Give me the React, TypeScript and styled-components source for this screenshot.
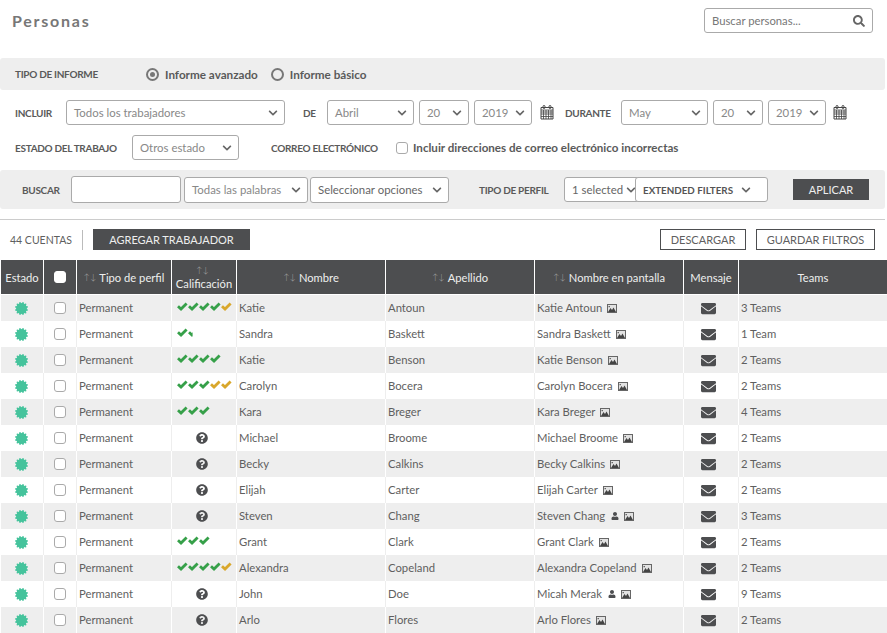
import React from 'react';
import styled, { createGlobalStyle } from 'styled-components';
import { FaCertificate, FaChevronDown, FaEnvelope, FaQuestionCircle, FaSearch, FaUser } from 'react-icons/fa';

const GlobalStyle = createGlobalStyle`
  html, body {
    margin: 0;
    padding: 0;
    background: #fff;
    overflow: hidden;
  }
  body {
    font-family: "Lato", "Liberation Sans", sans-serif;
    font-size: 12px;
    color: #5f5f5f;
  }
  * { box-sizing: border-box; }
`;

const Page = styled.div`
  width: 887px;
  height: 633px;
  overflow: hidden;
`;

const TopBar = styled.div`
  height: 58px;
  display: flex;
  justify-content: space-between;
  padding: 8px 14px 0 12px;
`;

const Title = styled.h1`
  margin: 3px 0 0;
  font-size: 16px;
  font-weight: 700;
  letter-spacing: 1.75px;
  color: #777;
`;

const SearchBox = styled.div`
  width: 169px;
  height: 25px;
  border: 1px solid #aaa;
  border-radius: 3px;
  display: flex;
  align-items: center;
  justify-content: space-between;
  padding: 0 7px;
  font-size: 11.3px;
  color: #777;
  svg { color: #666; font-size: 12px; }
`;

const Band = styled.div<{ $h: number; $pad: number; $top?: number }>`
  width: 885px;
  height: ${(p) => p.$h}px;
  margin-top: ${(p) => p.$top ?? 0}px;
  padding-left: ${(p) => p.$pad}px;
  background: #eee;
  border-radius: 3px;
  display: flex;
  align-items: center;
`;

const Label = styled.span<{ $w?: number; $left?: number }>`
  font-size: 10px;
  font-weight: 700;
  letter-spacing: -0.3px;
  color: #5a5a5a;
  white-space: nowrap;
  ${(p) => (p.$w ? `width: ${p.$w}px; flex: none;` : '')}
  ${(p) => (p.$left ? `padding-left: ${p.$left}px;` : '')}
`;

const Radio = styled.span<{ $on?: boolean }>`
  width: 13px;
  height: 13px;
  border-radius: 50%;
  border: 2px solid #777;
  display: inline-flex;
  align-items: center;
  justify-content: center;
  margin-right: 6px;
  flex: none;
  &::after {
    content: '';
    width: 5px;
    height: 5px;
    border-radius: 50%;
    background: ${(p) => (p.$on ? '#777' : 'transparent')};
  }
`;

const OptionText = styled.span`
  font-size: 11.7px;
  font-weight: 700;
  color: #5a5a5a;
  margin-right: 13px;
  white-space: nowrap;
`;

const FilterRow = styled.div<{ $top: number }>`
  display: flex;
  align-items: center;
  height: 25px;
  margin-top: ${(p) => p.$top}px;
  padding-left: 15px;
`;

const Gap = styled.span<{ $w: number }>`
  width: ${(p) => p.$w}px;
  flex: none;
`;

const SelectBox = styled.div<{ $w: number; $h?: number; $left?: number; $dark?: boolean }>`
  width: ${(p) => p.$w}px;
  height: ${(p) => p.$h ?? 25}px;
  margin-left: ${(p) => p.$left ?? 0}px;
  flex: none;
  background: #fff;
  border: 1px solid #aaa;
  border-radius: 3px;
  display: flex;
  align-items: center;
  justify-content: space-between;
  padding: 0 6px 0 7px;
  font-size: 11.4px;
  color: ${(p) => (p.$dark ? '#666' : '#888')};
  white-space: nowrap;
  svg { color: #666; font-size: 10px; flex: none; }
`;

const ExtendedBox = styled(SelectBox)`
  position: relative;
  margin-left: -8px;
  justify-content: flex-start;
  gap: 8px;
  font-size: 9.8px;
  font-weight: 700;
  color: #555;
`;

const CalendarIcon = styled.svg`
  width: 14px;
  height: 15px;
  flex: none;
`;

const CheckBox = styled.span<{ $white?: boolean }>`
  display: block;
  width: 12px;
  height: 12px;
  border: 1px solid ${(p) => (p.$white ? '#fff' : '#aaa')};
  border-radius: 3px;
  background: #fff;
  flex: none;
`;

const CheckLabel = styled.span`
  margin-left: 5px;
  font-size: 11.6px;
  font-weight: 700;
  color: #5a5a5a;
  white-space: nowrap;
`;

const SearchInput = styled.div`
  width: 110px;
  height: 27px;
  margin-left: 10px;
  flex: none;
  background: #fff;
  border: 1px solid #aaa;
  border-radius: 3px;
`;

const DarkButton = styled.button<{ $w: number; $left: number }>`
  width: ${(p) => p.$w}px;
  height: 21px;
  margin-left: ${(p) => p.$left}px;
  flex: none;
  border: 0;
  background: #4d4e50;
  color: #eee;
  font-family: inherit;
  font-size: 11px;
  padding: 0;
`;

const OutlineButton = styled.button<{ $w: number; $left: number }>`
  width: ${(p) => p.$w}px;
  height: 21px;
  margin-left: ${(p) => p.$left}px;
  border: 1px solid #4d4e50;
  background: #fff;
  color: #5f5f5f;
  font-family: inherit;
  font-size: 11px;
  padding: 0;
`;

const Divider = styled.hr`
  width: 885px;
  height: 1px;
  margin: 10px 0 0;
  border: 0;
  background: #ccc;
`;

const Toolbar = styled.div`
  height: 21px;
  margin-top: 9px;
  padding: 0 12px 0 10px;
  display: flex;
  align-items: center;
`;

const Count = styled.span`
  font-size: 10.5px;
  color: #5f5f5f;
  padding-right: 10px;
  margin-right: 10px;
  line-height: 20px;
  border-right: 1px solid #bbb;
`;

const Spacer = styled.div`
  flex: 1;
`;

const columns = '42px 32px 94px 64px 148px 148px 148px 54px 148px';

const HeaderRow = styled.div`
  display: grid;
  grid-template-columns: ${columns};
  column-gap: 1px;
  height: 34px;
  margin: 10px 0 1px 1px;
  background: #fff;
`;

const HeaderCell = styled.div`
  background: #4d4e50;
  color: #eee;
  font-size: 11.2px;
  display: flex;
  align-items: center;
  justify-content: center;
  white-space: nowrap;
`;

const StackCell = styled(HeaderCell)`
  flex-direction: column;
  line-height: 14px;
`;

const SortArrows = styled.span`
  color: #aaa;
  font-size: 8.5px;
  font-weight: 300;
  margin-right: 3px;
`;

const Row = styled.div<{ $odd: boolean }>`
  display: grid;
  grid-template-columns: ${columns};
  column-gap: 1px;
  height: 26px;
  margin-left: 1px;
  background: ${(p) => (p.$odd ? '#fff' : '#eee')};
  > div + div { box-shadow: -1px 0 0 ${(p) => (p.$odd ? '#eee' : '#fff')}; }
`;

const Cell = styled.div`
  display: flex;
  align-items: center;
  padding: 0 0 2px 2px;
  font-size: 11.3px;
  color: #5f5f5f;
  white-space: nowrap;
  min-width: 0;
`;

// centred icon cell, $shift moves the icon left of the middle
const IconCell = styled.div<{ $shift?: number }>`
  display: flex;
  align-items: center;
  justify-content: center;
  padding-right: ${(p) => p.$shift ?? 0}px;
`;

const CheckCell = styled(IconCell)`
  padding-bottom: 1px;
`;

const Status = styled(FaCertificate)`
  color: #45c39c;
  font-size: 13px;
`;

const Stars = styled.span`
  display: flex;
  margin: -1px 0 0 3px;
`;

const TickIcon = styled.svg<{ $half?: boolean }>`
  width: 11px;
  height: 9px;
  flex: none;
  ${(p) => (p.$half ? 'clip-path: inset(0 58% 0 0);' : '')}
`;

const Tick: React.FC<{ color: string; half?: boolean }> = ({ color, half }) => (
  <TickIcon viewBox="0 0 11 9" $half={half}>
    <path d="M1 4.2 L4 7 L9.6 1.4" fill="none" stroke={color} strokeWidth="2.8" />
  </TickIcon>
);

const Question = styled(FaQuestionCircle)`
  color: #4d4e50;
  font-size: 12px;
`;

const Mail = styled(FaEnvelope)`
  color: #4d4e50;
  font-size: 15px;
`;

const UserIcon = styled(FaUser)`
  color: #4d4e50;
  font-size: 8px;
  margin: 2px 0 0 6px;
  flex: none;
`;

const PhotoIcon = styled.svg`
  width: 10px;
  height: 9px;
  margin: 2px 0 0 5px;
  flex: none;
`;

const Photo = () => (
  <PhotoIcon viewBox="0 0 10 9">
    <rect x="0.5" y="0.5" width="9" height="8" fill="#e2e2e2" stroke="#666" />
    <path d="M1 8 L3.5 4 L5 6 L6.5 3.5 L9 8 Z" fill="#444" />
    <rect x="1.5" y="2" width="1.5" height="1.2" fill="#666" />
  </PhotoIcon>
);

const Calendar = () => (
  <CalendarIcon viewBox="0 0 14 15">
    <rect x="3" y="0.5" width="2" height="3" rx="1" fill="none" stroke="#444" />
    <rect x="9" y="0.5" width="2" height="3" rx="1" fill="none" stroke="#444" />
    <path d="M1 2.5H3M5 2.5H9M11 2.5H13V14H1V2.5Z" fill="none" stroke="#444" />
    <path d="M1 5H13M1 7H13M1 9H13M1 11.5H13M3.5 5V14M6 5V14M8.5 5V14M11 5V14" stroke="#444" strokeWidth="0.8" />
  </CalendarIcon>
);

type Person = {
  rating: string;
  first: string;
  last: string;
  screen: string;
  user?: boolean;
  teams: string;
};

// g = green tick, y = gold tick, h = half tick, ? = not rated
const people: Person[] = [
  { rating: 'ggggy', first: 'Katie', last: 'Antoun', screen: 'Katie Antoun', teams: '3 Teams' },
  { rating: 'gh', first: 'Sandra', last: 'Baskett', screen: 'Sandra Baskett', teams: '1 Team' },
  { rating: 'gggg', first: 'Katie', last: 'Benson', screen: 'Katie Benson', teams: '2 Teams' },
  { rating: 'gggyy', first: 'Carolyn', last: 'Bocera', screen: 'Carolyn Bocera', teams: '2 Teams' },
  { rating: 'ggg', first: 'Kara', last: 'Breger', screen: 'Kara Breger', teams: '4 Teams' },
  { rating: '?', first: 'Michael', last: 'Broome', screen: 'Michael Broome', teams: '2 Teams' },
  { rating: '?', first: 'Becky', last: 'Calkins', screen: 'Becky Calkins', teams: '2 Teams' },
  { rating: '?', first: 'Elijah', last: 'Carter', screen: 'Elijah Carter', teams: '2 Teams' },
  { rating: '?', first: 'Steven', last: 'Chang', screen: 'Steven Chang', user: true, teams: '3 Teams' },
  { rating: 'ggg', first: 'Grant', last: 'Clark', screen: 'Grant Clark', teams: '2 Teams' },
  { rating: 'ggggy', first: 'Alexandra', last: 'Copeland', screen: 'Alexandra Copeland', teams: '2 Teams' },
  { rating: '?', first: 'John', last: 'Doe', screen: 'Micah Merak', user: true, teams: '9 Teams' },
  { rating: '?', first: 'Arlo', last: 'Flores', screen: 'Arlo Flores', teams: '2 Teams' },
];

const Rating: React.FC<{ value: string }> = ({ value }) => {
  if (value === '?') {
    return (
      <IconCell $shift={5}>
        <Question />
      </IconCell>
    );
  }
  return (
    <Cell>
      <Stars>
        {value.split('').map((c, i) => (
          <Tick key={i} color={c === 'y' ? '#d9a72b' : '#36a049'} half={c === 'h'} />
        ))}
      </Stars>
    </Cell>
  );
};

const Select: React.FC<{ w: number; h?: number; left?: number; dark?: boolean; text: string }> = ({ w, h, left, dark, text }) => (
  <SelectBox $w={w} $h={h} $left={left} $dark={dark}>
    {text}
    <FaChevronDown />
  </SelectBox>
);

const Sort = () => <SortArrows>↑↓</SortArrows>;

const App: React.FC = () => (
  <Page>
    <GlobalStyle />
    <TopBar>
      <Title>Personas</Title>
      <SearchBox>
        Buscar personas...
        <FaSearch />
      </SearchBox>
    </TopBar>

    <Band $h={32} $pad={15}>
      <Label $w={131}>TIPO DE INFORME</Label>
      <Radio $on />
      <OptionText>Informe avanzado</OptionText>
      <Radio />
      <OptionText>Informe básico</OptionText>
    </Band>

    <FilterRow $top={10}>
      <Label $w={51}>INCLUIR</Label>
      <Select w={219} text="Todos los trabajadores" />
      <Label $w={42} $left={18}>DE</Label>
      <Select w={87} text="Abril" />
      <Select w={50} text="20" left={5} />
      <Select w={58} text="2019" left={5} />
      <Gap $w={8} />
      <Calendar />
      <Gap $w={11} />
      <Label $w={56}>DURANTE</Label>
      <Select w={87} text="May" />
      <Select w={50} text="20" left={5} />
      <Select w={58} text="2019" left={5} />
      <Gap $w={7} />
      <Calendar />
    </FilterRow>

    <FilterRow $top={10}>
      <Label $w={117}>ESTADO DEL TRABAJO</Label>
      <Select w={107} text="Otros estado" />
      <Label $w={157} $left={32}>CORREO ELECTRÓNICO</Label>
      <CheckBox />
      <CheckLabel>Incluir direcciones de correo electrónico incorrectas</CheckLabel>
    </FilterRow>

    <Band $h={39} $pad={22} $top={10}>
      <Label $w={39}>BUSCAR</Label>
      <SearchInput />
      <Select w={124} h={26} left={3} text="Todas las palabras" />
      <Select w={139} h={26} left={2} dark text="Seleccionar opciones" />
      <Label $w={114} $left={30}>TIPO DE PERFIL</Label>
      <Select w={79} left={1} dark text="1 selected" />
      <ExtendedBox $w={133}>
        EXTENDED FILTERS
        <FaChevronDown />
      </ExtendedBox>
      <DarkButton $w={76} $left={25}>APLICAR</DarkButton>
    </Band>

    <Divider />

    <Toolbar>
      <Count>44 CUENTAS</Count>
      <DarkButton $w={157} $left={0}>AGREGAR TRABAJADOR</DarkButton>
      <Spacer />
      <OutlineButton $w={86} $left={0}>DESCARGAR</OutlineButton>
      <OutlineButton $w={119} $left={10}>GUARDAR FILTROS</OutlineButton>
    </Toolbar>

    <HeaderRow>
      <HeaderCell>Estado</HeaderCell>
      <HeaderCell><CheckBox $white /></HeaderCell>
      <HeaderCell><Sort />Tipo de perfil</HeaderCell>
      <StackCell><SortArrows>↑↓</SortArrows>Calificación</StackCell>
      <HeaderCell><Sort />Nombre</HeaderCell>
      <HeaderCell><Sort />Apellido</HeaderCell>
      <HeaderCell><Sort />Nombre en pantalla</HeaderCell>
      <HeaderCell>Mensaje</HeaderCell>
      <HeaderCell>Teams</HeaderCell>
    </HeaderRow>

    {people.map((p, i) => (
      <Row key={i} $odd={i % 2 === 1}>
        <IconCell $shift={2}><Status /></IconCell>
        <CheckCell><CheckBox /></CheckCell>
        <Cell>Permanent</Cell>
        <Rating value={p.rating} />
        <Cell>{p.first}</Cell>
        <Cell>{p.last}</Cell>
        <Cell>
          {p.screen}
          {p.user && <UserIcon />}
          <Photo />
        </Cell>
        <IconCell $shift={6}><Mail /></IconCell>
        <Cell>{p.teams}</Cell>
      </Row>
    ))}
  </Page>
);

export default App;
